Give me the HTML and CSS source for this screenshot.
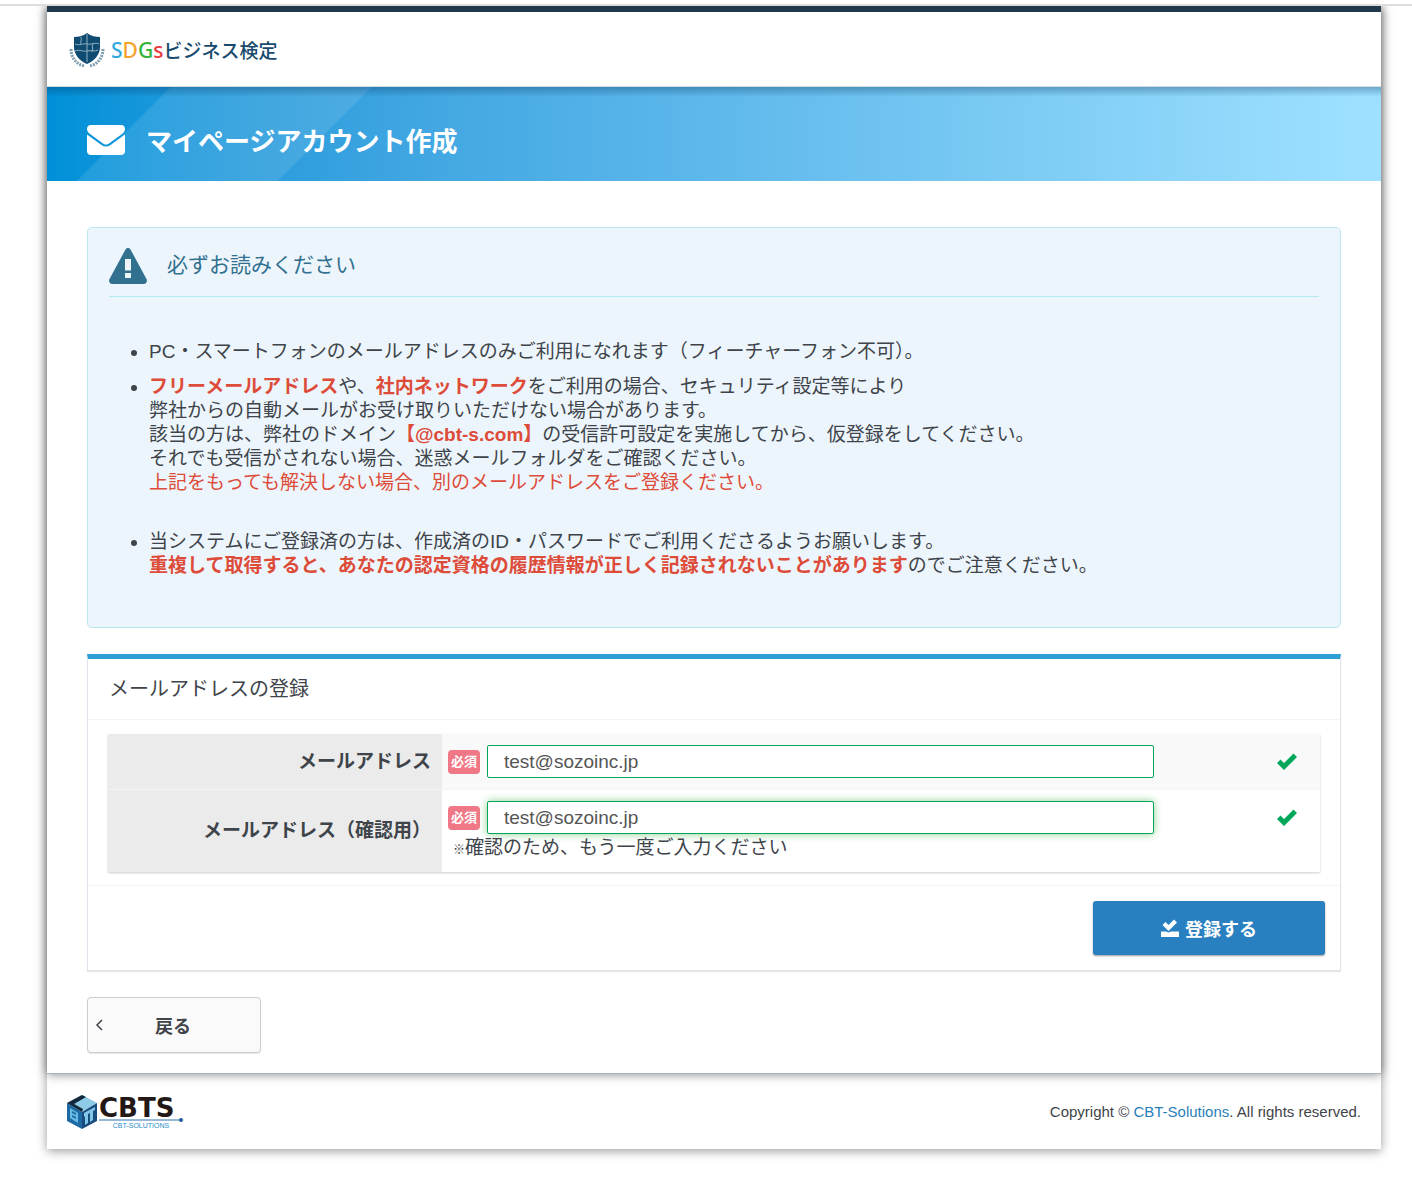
FILE: index.html
```
<!DOCTYPE html>
<html lang="ja">
<head>
  <meta charset="UTF-8">
  <meta name="viewport" content="width=device-width, initial-scale=1">
  <title>マイページアカウント作成</title>
  <link rel="stylesheet" href="styles.css">
</head>
<body>
  <div class="wrapper">
    <div class="page">
      <header class="header">
        <a href="#" class="logo">
          <svg class="logo-mark" viewBox="0 0 36 36" aria-hidden="true">
            <path d="M18 1C14 4 9 5 5 5v10c0 8 6 14 13 17 7-3 13-9 13-17V5c-4 0-9-1-13-4z" fill="#0f4a70"/>
            <path d="M18 2v28M6 12c5 2 8-1 12 0s8-2 12 0M6 19c5-2 8 1 12 0s8 1 11-1M12 5c1 3-1 5 0 7M24 12c-2 3 1 5-1 8" fill="none" stroke="#8fb0c4"/>
            <path d="M2 17c0 9 6 16 14 17M34 17c0 9-6 16-14 17" fill="none" stroke="#7f9fb2" stroke-width="3" stroke-dasharray="2 1"/>
          </svg>
          <span class="logo-text"><span class="logo-sdgs"><span class="c-blue">S</span><span class="c-orange">D</span><span class="c-green">G</span><span class="c-red">s</span></span>ビジネス検定</span>
        </a>
      </header>

      <div class="page-title">
        <svg class="icon-mail" viewBox="0 0 38 30" aria-hidden="true">
          <path d="M4 0h30c2.500 0 4 1.500 4 4 0 2.200-1.300 3.700-3 5L22 18.500c-2 1.500-4 1.500-6 0L3 9C1.300 7.700 0 6.200 0 4 0 1.500 1.500 0 4 0z"/>
          <path d="M0 9.500l14.500 10.500c3 2 6 2 9 0L38 9.500V26c0 2.500-1.500 4-4 4H4c-2.500 0-4-1.500-4-4z"/>
        </svg>
        <h1>マイページアカウント作成</h1>
      </div>

      <main class="content">
        <section class="notice">
          <div class="notice-head">
            <svg class="icon-warning" viewBox="0 0 38 36" aria-hidden="true">
              <path fill-rule="evenodd" d="M16.500 1.500c1.200-2 3.800-2 5 0l16 29.500c1.200 2.300-.3 5-2.800 5H3.300C.8 36-.7 33.300.5 31zM16 11v11.500h6V11zM16 25v5h6v-5z"/>
            </svg>
            <h2>必ずお読みください</h2>
          </div>
          <ul>
            <li>PC・スマートフォンのメールアドレスのみご利用になれます（フィーチャーフォン不可）。</li>
            <li>
              <strong>フリーメールアドレス</strong>や、<strong>社内ネットワーク</strong>をご利用の場合、セキュリティ設定等により<br>
              弊社からの自動メールがお受け取りいただけない場合があります。<br>
              該当の方は、弊社のドメイン<strong>【@cbt-s.com】</strong>の受信許可設定を実施してから、仮登録をしてください。<br>
              それでも受信がされない場合、迷惑メールフォルダをご確認ください。<br>
              <span class="text-red">上記をもっても解決しない場合、別のメールアドレスをご登録ください。</span><br><br>
            </li>
            <li>
              当システムにご登録済の方は、作成済のID・パスワードでご利用くださるようお願いします。<br>
              <strong>重複して取得すると、あなたの認定資格の履歴情報が正しく記録されないことがあります</strong>のでご注意ください。
            </li>
          </ul>
        </section>

        <form class="card">
          <h2 class="card-title">メールアドレスの登録</h2>
          <div class="card-body">
            <table class="form-table">
              <tr>
                <th scope="row"><label for="email">メールアドレス</label></th>
                <td>
                  <div class="field">
                    <span class="required">必須</span>
                    <input type="email" id="email" value="test@sozoinc.jp">
                    <svg class="icon-check" viewBox="0 0 20 18" aria-hidden="true"><path d="M0 10l3.500-3.500L7 10 16.500.500 20 4 7 17z"/></svg>
                  </div>
                </td>
              </tr>
              <tr>
                <th scope="row"><label for="emailConfirm">メールアドレス（確認用）</label></th>
                <td>
                  <div class="field">
                    <span class="required">必須</span>
                    <input type="email" id="emailConfirm" class="is-active" value="test@sozoinc.jp">
                    <svg class="icon-check" viewBox="0 0 20 18" aria-hidden="true"><path d="M0 10l3.500-3.500L7 10 16.500.500 20 4 7 17z"/></svg>
                  </div>
                  <p class="note"><span class="note-mark">※</span>確認のため、もう一度ご入力ください</p>
                </td>
              </tr>
            </table>
          </div>
          <div class="card-foot">
            <button type="submit" class="btn-submit">
              <svg class="icon-save" viewBox="0 0 18 18" aria-hidden="true"><path d="M1.500 6l3-3L7.500 6 13 .500 16 3.500 7.500 12zM0 12.500h5l2.500 1 2.500-1h8V18H0z"/></svg>
              登録する
            </button>
          </div>
        </form>

        <button type="button" class="btn-back">
          <svg class="icon-back" viewBox="0 0 8 12" aria-hidden="true"><path d="M7 1L2 6l5 5"/></svg>
          <span>戻る</span>
        </button>
      </main>
    </div>

    <footer class="footer">
      <a href="#" class="cbts">
        <svg class="cbts-mark" viewBox="0 0 30 34" aria-hidden="true">
          <path d="M15 0l15 8-15 9L0 8z" fill="#8ecbe6"/>
          <path d="M0 8l15 9v17L0 26z" fill="#1f6aa5"/>
          <path d="M30 8l-15 9v17l15-8z" fill="#174c7c"/>
          <path d="M0 8L15 0l4 2L7 9l9 5-1 3z" fill="#14283d"/>
          <path fill-rule="evenodd" d="M3 13l8 5v10l-8-5zM5 16v2l4 2v-2zM5 20v2l4 2v-2z" fill="#67bce3"/>
          <path d="M17 18l11-6v3l-2 1v9l-3 2v-9l-2 1v9l-3 2v-9l-1 1z" fill="#83c8e8"/>
        </svg>
        <span class="cbts-text">
          <span class="cbts-name">CBTS</span>
          <svg class="cbts-line" viewBox="0 0 84 4" aria-hidden="true"><path d="M0 2h82" stroke="#2a73ad"/><circle cx="82" cy="2" r="2" fill="#1d5f9e"/></svg>
          <span class="cbts-sub">CBT-SOLUTIONS</span>
        </span>
      </a>
      <p class="copyright">Copyright © <a href="#">CBT-Solutions</a>. All rights reserved.</p>
    </footer>
  </div>
</body>
</html>
```

FILE: styles.css
```
* {
  box-sizing: border-box;
}
body {
  margin: 4px 0 0;
  padding-bottom: 28px;
  border-top: 2px solid #dddddd;
  background: #fff;
  color: #3e444a;
  font-family: "Liberation Sans", "Noto Sans CJK JP", sans-serif;
  font-size: 19px;
  line-height: 24px;
}
h1, h2, p, ul {
  margin: 0;
}
a {
  color: #2980b9;
  text-decoration: none;
}
button, input {
  font-family: inherit;
}
.wrapper {
  margin: 0 31px 0 47px;
  box-shadow: 0 2px 10px rgba(0,0,0,0.4);
}
.page {
  border-bottom: 1px solid #a9b4bd;
  box-shadow: 0 0 10px rgba(0,0,0,0.5);
}

/* ヘッダー */
.header {
  display: flex;
  align-items: center;
  height: 81px;
  padding: 2px 22px 0;
  border-top: 6px solid #22384b;
  border-bottom: 1px solid #d5dde0;
  background: #fff;
}
.logo {
  display: flex;
  align-items: center;
  gap: 6px;
}
.logo-mark {
  width: 36px;
  height: 36px;
}
.logo-text {
  color: #174a6c;
  font-family: "Noto Sans CJK JP", sans-serif;
  font-size: 19px;
  font-weight: 500;
}
.logo-sdgs {
  font-family: "Noto Sans", sans-serif;
  font-size: 21px;
}
.c-blue { color: #35a8e0; }
.c-orange { color: #f5a32c; }
.c-green { color: #35b43a; }
.c-red { color: #e93a3f; }

/* ページタイトル */
.page-title {
  display: flex;
  align-items: center;
  gap: 21px;
  height: 94px;
  padding: 12px 40px 0;
  /* 上の影、斜めの帯、横グラデーション */
  background:
    linear-gradient(180deg, rgba(0,40,80,0.3), transparent 10px),
    linear-gradient(135deg, transparent 87px, rgba(255,255,255,0.1) 88px, rgba(255,255,255,0.1) 229px, transparent 230px),
    linear-gradient(90deg, #0090d8 0, #1b98dc 9%, #2f9edd 18%, #44a8e3 30%, #9de0ff 98%);
  color: #fff;
}
.page-title h1 {
  padding-top: 4px;
  font-size: 26px;
  line-height: 36px;
}
.icon-mail {
  width: 38px;
  height: 30px;
  fill: #fff;
}

.content {
  padding: 46px 40px 20px;
}

/* 注意事項 */
.notice {
  margin-bottom: 26px;
  padding: 20px 21px 49px;
  border: 1px solid #b8e7ee;
  border-radius: 5px;
  background: #edf5fc;
}
.notice-head {
  display: flex;
  align-items: flex-start;
  gap: 20px;
  margin-bottom: 43px;
  padding-bottom: 12px;
  border-bottom: 1px solid #b4e9ee;
  color: #31708f;
}
.notice-head h2 {
  font-size: 21px;
  font-weight: normal;
  line-height: 34px;
}
.icon-warning {
  width: 38px;
  height: 36px;
  fill: #31708f;
}
.notice ul {
  padding-left: 40px;
}
.notice li + li {
  margin-top: 11px;
}
.notice strong, .text-red {
  color: #dd4b39;
}

/* 入力フォーム */
.card {
  border: 1px solid #dfe5ec;
  border-top: 5px solid #2e9fd6;
  box-shadow: 0 1px 1px rgba(0,0,0,0.1);
}
.card-title {
  padding: 18px 21px;
  border-bottom: 1px solid #f4f4f4;
  font-size: 20px;
  font-weight: normal;
}
.card-body {
  padding: 14px 20px 13px;
}
.form-table {
  width: 100%;
  border-spacing: 0;
  table-layout: fixed;
  box-shadow: 0 1px 2px rgba(0,0,0,0.2);
}
.form-table th {
  width: 334px;
  padding: 0 11px;
  background: #ebebeb;
  text-align: right;
}
.form-table td {
  padding: 11px 6px;
}
.form-table tr:first-child th,
.form-table tr:first-child td {
  border-bottom: 1px solid #f4f4f4;
}
.form-table tr:first-child td {
  background: #f9f9f9;
}
.field {
  display: flex;
  align-items: center;
}
.required {
  flex: none;
  width: 32px;
  margin-right: 7px;
  border-radius: 4px;
  background: #f07886;
  color: #fff;
  font-size: 13px;
  font-weight: bold;
  text-align: center;
}
.field input {
  width: 77%;
  height: 33px;
  padding: 0 16px;
  border: 1px solid #00a65a;
  border-radius: 2px;
  background: #fff;
  color: #555;
  font-size: 19px;
  outline: none;
}
.field input.is-active {
  box-shadow: 0 0 8px #8fce8f;
}
.icon-check {
  width: 20px;
  height: 18px;
  margin-left: auto;
  margin-right: 17px;
  fill: #00a65a;
}
.note {
  padding: 2px 5px 1px;
}
.note-mark {
  font-size: 12px;
  font-weight: bold;
  line-height: 12px;
}
.card-foot {
  display: flex;
  justify-content: flex-end;
  padding: 15px;
  border-top: 1px solid #f4f4f4;
}
.btn-submit {
  display: flex;
  align-items: center;
  justify-content: center;
  gap: 6px;
  width: 232px;
  height: 54px;
  border: 0;
  border-radius: 3px;
  background: #2980c0;
  box-shadow: 0 1px 2px rgba(0,0,0,0.4);
  color: #fff;
  font-size: 18px;
  font-weight: bold;
}
.icon-save {
  width: 18px;
  height: 18px;
  fill: #fff;
}
.btn-back {
  display: flex;
  align-items: center;
  width: 174px;
  height: 56px;
  margin-top: 26px;
  padding: 0 7px;
  border: 1px solid #ccc;
  border-radius: 4px;
  background: #fafafa;
  box-shadow: 0 1px 1px rgba(0,0,0,0.1);
  color: #3e444a;
  font-size: 18px;
  font-weight: bold;
}
.btn-back span {
  flex: 1;
  padding-right: 10px;
}
.icon-back {
  width: 8px;
  height: 12px;
  fill: none;
  stroke: #3e444a;
  stroke-width: 1.500;
}

/* フッター */
.footer {
  display: flex;
  align-items: center;
  justify-content: space-between;
  height: 75px;
  padding: 0 20px;
}
.cbts {
  display: flex;
  align-items: center;
  gap: 2px;
}
.cbts-mark {
  width: 30px;
  height: 34px;
}
.cbts-text {
  display: flex;
  flex-direction: column;
  padding-top: 4px;
}
.cbts-name {
  color: #231815;
  font-family: "DejaVu Sans", sans-serif;
  font-size: 26px;
  font-weight: bold;
  line-height: 20px;
}
.cbts-line {
  width: 84px;
  height: 4px;
}
.cbts-sub {
  color: #2a8fc7;
  font-size: 7px;
  line-height: 7px;
  text-align: center;
}
.copyright {
  font-size: 15px;
}
```
